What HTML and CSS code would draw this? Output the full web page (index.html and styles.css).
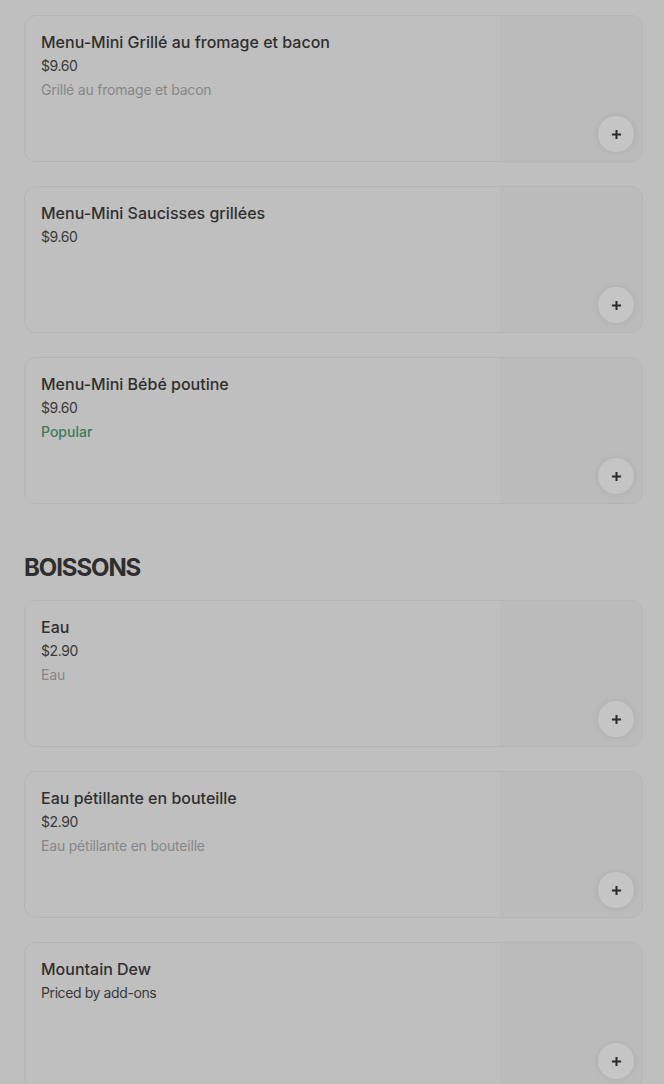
FILE: index.html
```html
<!DOCTYPE html>
<html lang="fr">
<head>
<meta charset="utf-8">
<title>Menu</title>
<link rel="stylesheet" href="styles.css">
</head>
<body>
<main class="menu">
  <section class="list">
    <article class="item">
      <div class="info">
        <h3 class="title">Menu-Mini Grillé au fromage et bacon</h3>
        <p class="price">$9.60</p>
        <p class="desc">Grillé au fromage et bacon</p>
      </div>
      <div class="thumb"></div>
      <button class="add" aria-label="Ajouter"><svg viewBox="0 0 12 12" width="11" height="11"><path d="M6 1v10M1 6h10" stroke="currentColor" stroke-width="2.2" fill="none"/></svg></button>
    </article>
    <article class="item">
      <div class="info">
        <h3 class="title">Menu-Mini Saucisses grillées</h3>
        <p class="price">$9.60</p>
      </div>
      <div class="thumb"></div>
      <button class="add" aria-label="Ajouter"><svg viewBox="0 0 12 12" width="11" height="11"><path d="M6 1v10M1 6h10" stroke="currentColor" stroke-width="2.2" fill="none"/></svg></button>
    </article>
    <article class="item">
      <div class="info">
        <h3 class="title">Menu-Mini Bébé poutine</h3>
        <p class="price">$9.60</p>
        <p class="popular">Popular</p>
      </div>
      <div class="thumb"></div>
      <button class="add" aria-label="Ajouter"><svg viewBox="0 0 12 12" width="11" height="11"><path d="M6 1v10M1 6h10" stroke="currentColor" stroke-width="2.2" fill="none"/></svg></button>
    </article>
  </section>

  <h2 class="section-title">BOISSONS</h2>

  <section class="list">
    <article class="item">
      <div class="info">
        <h3 class="title">Eau</h3>
        <p class="price">$2.90</p>
        <p class="desc">Eau</p>
      </div>
      <div class="thumb"></div>
      <button class="add" aria-label="Ajouter"><svg viewBox="0 0 12 12" width="11" height="11"><path d="M6 1v10M1 6h10" stroke="currentColor" stroke-width="2.2" fill="none"/></svg></button>
    </article>
    <article class="item">
      <div class="info">
        <h3 class="title">Eau pétillante en bouteille</h3>
        <p class="price">$2.90</p>
        <p class="desc">Eau pétillante en bouteille</p>
      </div>
      <div class="thumb"></div>
      <button class="add" aria-label="Ajouter"><svg viewBox="0 0 12 12" width="11" height="11"><path d="M6 1v10M1 6h10" stroke="currentColor" stroke-width="2.2" fill="none"/></svg></button>
    </article>
    <article class="item">
      <div class="info">
        <h3 class="title">Mountain Dew</h3>
        <p class="price">Priced by add-ons</p>
      </div>
      <div class="thumb"></div>
      <button class="add" aria-label="Ajouter"><svg viewBox="0 0 12 12" width="11" height="11"><path d="M6 1v10M1 6h10" stroke="currentColor" stroke-width="2.2" fill="none"/></svg></button>
    </article>
  </section>
</main>
</body>
</html>
```

FILE: styles.css
```css
* { box-sizing: border-box; }

html, body {
  margin: 0;
  padding: 0;
  background: #bfbfbf;
  font-family: Inter, "Noto Sans", sans-serif;
  height: 1084px;
  overflow: hidden;
}

.menu {
  padding: 15px 21px 0 24px;
}

.list {
  display: flex;
  flex-direction: column;
  gap: 24px;
}

.item {
  position: relative;
  display: flex;
  height: 147px;
  border: 1px solid #b4b4b4;
  border-radius: 12px;
  overflow: hidden;
}

.info {
  flex: 1;
  padding: 16px 16px 0 16px;
  display: flex;
  flex-direction: column;
  gap: 4px;
}

.title {
  margin: 0;
  font-size: 16px;
  line-height: 20px;
  font-weight: 500;
  color: #2f2f2f;
}

.price {
  margin: 0;
  font-size: 14px;
  line-height: 20px;
  color: #3a3a3a;
  letter-spacing: -0.4px;
}

.desc {
  margin: 0;
  font-size: 14px;
  line-height: 20px;
  color: #878787;
  letter-spacing: -0.2px;
}

.popular {
  margin: 0;
  font-size: 14px;
  line-height: 20px;
  font-weight: 500;
  color: #3d7b5d;
}

.thumb {
  width: 142px;
  background: #bbbbbb;
}

.add {
  position: absolute;
  right: 8px;
  bottom: 9px;
  width: 36px;
  height: 36px;
  border: none;
  border-radius: 50%;
  background: #c5c5c5;
  box-shadow: 0 0 6px rgba(0, 0, 0, 0.08);
  color: #2b2b2b;
  display: flex;
  align-items: center;
  justify-content: center;
  padding: 0;
}

.section-title {
  margin: 48px 0 16px;
  font-size: 24px;
  line-height: 32px;
  font-weight: 700;
  letter-spacing: -1.1px;
  color: #2e2e2e;
}
```
